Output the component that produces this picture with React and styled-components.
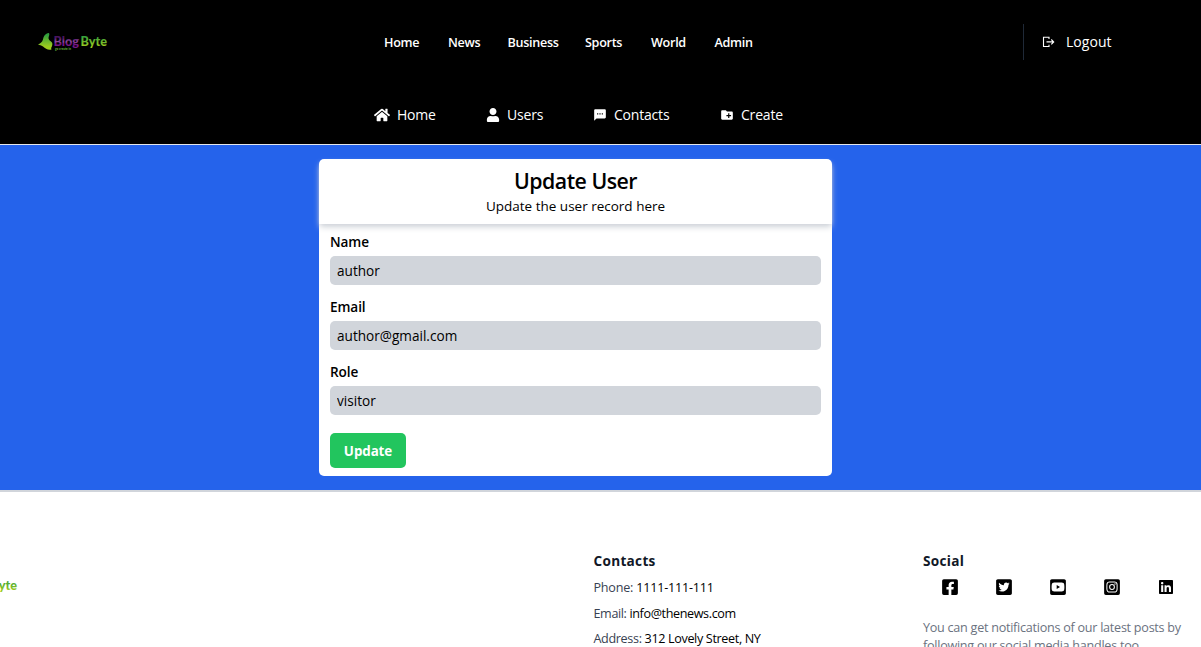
import React from "react";
import styled, { createGlobalStyle } from "styled-components";
import { FaHome, FaUser, FaFacebookSquare, FaTwitterSquare, FaYoutubeSquare, FaInstagramSquare, FaLinkedin } from "react-icons/fa";
import { MdSms, MdCreateNewFolder } from "react-icons/md";

const GlobalStyle = createGlobalStyle`
  *, *::before, *::after { box-sizing: border-box; }
  html, body { height: 647px; overflow: hidden; }
  body {
    margin: 0;
    background: #fff;
    color: #000;
    font-family: "Open Sans", "Noto Sans", sans-serif;
    font-size: 14px;
    line-height: 22px;
  }
  p, h1, h2 { margin: 0; padding: 0; }
  a { color: inherit; text-decoration: none; }
  svg { display: block; flex: none; }
`;

const Header = styled.header`
  height: 145px;
  background: #000;
  color: #fff;
  border-bottom: 1px solid #e5e7eb;
`;

const TopBar = styled.div`
  display: flex;
  align-items: center;
  height: 84px;
  padding-left: 36px;
`;

const MainNav = styled.nav`
  display: flex;
  margin-left: 274px;
  padding-top: 2px;
  width: 639px;
`;

const NavLink = styled.a`
  width: ${(p) => p.$w}px;
  font-size: 12.6px;
  font-weight: 600;
  letter-spacing: -0.3px;
  white-space: nowrap;
`;

const Logout = styled.a`
  display: flex;
  align-items: center;
  height: 36px;
  padding-left: 18px;
  border-left: 1px solid #1f2937;
  gap: 11px;
  font-size: 14px;
  letter-spacing: 0.05px;
`;

const AdminNav = styled.nav`
  display: flex;
  align-items: center;
  height: 62px;
  padding-left: 374px;
`;

const AdminLink = styled.a`
  display: flex;
  align-items: center;
  gap: 7px;
  width: ${(p) => p.$w}px;
  font-size: 14px;
  letter-spacing: -0.2px;
  white-space: nowrap;
`;

const Main = styled.main`
  display: flex;
  height: 347px;
  padding: 14px 0 0 319px;
  background: #2563eb;
  border-bottom: 2px solid #d1d5db;
`;

const Card = styled.section`
  width: 513px;
  height: 317px;
  background: #fff;
  border-radius: 5px;
`;

const CardHeader = styled.div`
  height: 65px;
  padding-top: 8px;
  text-align: center;
  border-radius: 5px 5px 0 0;
  box-shadow: 0 4px 6px -1px #d1d5db, 0 2px 4px -2px #d1d5db;
`;

const Title = styled.h1`
  font-size: 21.3px;
  font-weight: 600;
  line-height: 28px;
  letter-spacing: -0.5px;
`;

const Subtitle = styled.p`
  padding-top: 1px;
  font-size: 13.5px;
  line-height: 21px;
`;

const Form = styled.form`
  display: flex;
  flex-direction: column;
  align-items: flex-start;
  padding: 7px 11px 0;
`;

const Label = styled.label`
  height: 25px;
  font-size: 13.6px;
  font-weight: 600;
  letter-spacing: -0.1px;
`;

const Input = styled.input`
  width: 100%;
  height: 29px;
  margin-bottom: 11px;
  padding: 0 7px;
  border: 0;
  border-radius: 5px;
  background: #d1d5db;
  color: #000;
  font: 13.6px "Open Sans", "Noto Sans", sans-serif;
`;

const Button = styled.button`
  width: 76px;
  height: 35px;
  margin-top: 7px;
  padding: 0;
  border: 0;
  border-radius: 5px;
  background: #22c55e;
  color: #fff;
  font: 700 13.4px "Open Sans", "Noto Sans", sans-serif;
  letter-spacing: -0.1px;
`;

const Footer = styled.footer`
  display: flex;
  height: 155px;
  padding-top: 58px;
  overflow: hidden;
`;

const FooterBrand = styled.div`
  width: 593.5px;
  padding-top: 25px;
  overflow: hidden;
  svg { margin-left: -54px; }
`;

const Contacts = styled.div`
  width: 329.5px;
`;

const Social = styled.div`
  width: 278px;
`;

const FooterTitle = styled.h2`
  font-size: 13.6px;
  font-weight: 700;
  line-height: 22px;
  letter-spacing: 0.3px;
  color: #111827;
`;

const ContactLine = styled.p`
  margin-top: ${(p) => p.$gap || 4}px;
  height: 22px;
  font-size: 12.6px;
  letter-spacing: ${(p) => p.$ls || "-0.35px"};
  color: #000;
  span { color: #374151; }
`;

const SocialLinks = styled.div`
  display: flex;
  align-items: center;
  height: 18px;
  margin-top: 6px;
  padding-left: 18px;
  a { width: 54px; }
  a:last-child { padding-left: 1px; width: 18px; }
`;

const Note = styled.p`
  margin-top: 23px;
  font-size: 12.6px;
  line-height: 18px;
  letter-spacing: -0.26px;
  color: #6b7280;
  white-space: nowrap;
`;

const LogoutIcon = () => (
  <svg width="13" height="12" viewBox="0 0 13 12" fill="none" stroke="currentColor" strokeWidth="1.1">
    <path d="M7 3V1.3H1.5V10.5H7V8.8M4.5 5.9H11.7M9.3 3.5L11.7 5.9L9.3 8.3" />
  </svg>
);

const Logo = ({ id }) => (
  <svg width="74" height="22" viewBox="0 0 74 22" fontFamily="Lato, sans-serif" fontWeight="900">
    <defs>
      <linearGradient id={`${id}-leaf`} x1="0" y1="0" x2="0" y2="1">
        <stop offset="0.1" stopColor="#2e9e3e" />
        <stop offset="0.8" stopColor="#9bcb1f" />
      </linearGradient>
      <linearGradient id={`${id}-plum`} x1="0" y1="0" x2="0" y2="1">
        <stop offset="0.25" stopColor="#4a1560" />
        <stop offset="0.5" stopColor="#8d4a9c" />
        <stop offset="0.62" stopColor="#701480" />
        <stop offset="1" stopColor="#7d1990" />
      </linearGradient>
    </defs>
    <path d="M13 2C9 2.5 7.5 5.5 7 8.5C6 11.5 4 12.5 2 13.5C4 14 5 14.5 7 15.5C9.500 17.500 12 19.500 15.500 18.500C14.500 16.500 17 15 16.200 12C15.500 10 12.500 9.500 12.500 7C12.500 5 14 4 13 2Z" fill={`url(#${id}-leaf)`} />
    <text x="17.5" y="15.3" fontSize="12.5" textLength="25.5" lengthAdjust="spacingAndGlyphs" fill={`url(#${id}-plum)`}>Blog</text>
    <text x="44.5" y="15.3" fontSize="12.5" textLength="26.500" lengthAdjust="spacingAndGlyphs" fill={`url(#${id}-leaf)`}>Byte</text>
    <text x="19" y="18.5" fontSize="3.4" textLength="16" lengthAdjust="spacingAndGlyphs" fill="#5fa83a">go create in</text>
  </svg>
);

const sections = [["Home", 64], ["News", 59.5], ["Business", 77.5], ["Sports", 66], ["World", 63.5], ["Admin", 45]];

export default function App() {
  return (
    <>
      <GlobalStyle />
      <Header>
        <TopBar>
          <Logo id="top" />
          <MainNav>
            {sections.map(([name, w]) => <NavLink key={name} $w={w} href="#">{name}</NavLink>)}
          </MainNav>
          <Logout href="#"><LogoutIcon />Logout</Logout>
        </TopBar>
        <AdminNav>
          <AdminLink $w={112} href="#"><FaHome size={16} />Home</AdminLink>
          <AdminLink $w={107} href="#"><FaUser size={14} />Users</AdminLink>
          <AdminLink $w={127} href="#"><MdSms size={14} />Contacts</AdminLink>
          <AdminLink $w={80} href="#"><MdCreateNewFolder size={14} />Create</AdminLink>
        </AdminNav>
      </Header>
      <Main>
        <Card>
          <CardHeader>
            <Title>Update User</Title>
            <Subtitle>Update the user record here</Subtitle>
          </CardHeader>
          <Form>
            <Label>Name</Label>
            <Input defaultValue="author" />
            <Label>Email</Label>
            <Input defaultValue="author@gmail.com" />
            <Label>Role</Label>
            <Input defaultValue="visitor" />
            <Button type="button">Update</Button>
          </Form>
        </Card>
      </Main>
      <Footer>
        <FooterBrand><Logo id="foot" /></FooterBrand>
        <Contacts>
          <FooterTitle>Contacts</FooterTitle>
          <ContactLine $gap={5} $ls="-0.22px"><span>Phone:</span> 1111-111-111</ContactLine>
          <ContactLine $ls="-0.38px"><span>Email:</span> info@thenews.com</ContactLine>
          <ContactLine $gap={3}><span>Address:</span> 312 Lovely Street, NY</ContactLine>
        </Contacts>
        <Social>
          <FooterTitle>Social</FooterTitle>
          <SocialLinks>
            <a href="#"><FaFacebookSquare size={18} /></a>
            <a href="#"><FaTwitterSquare size={18} /></a>
            <a href="#"><FaYoutubeSquare size={18} /></a>
            <a href="#"><FaInstagramSquare size={18} /></a>
            <a href="#"><FaLinkedin size={16} /></a>
          </SocialLinks>
          <Note>You can get notifications of our latest posts by<br />following our social media handles too.</Note>
        </Social>
      </Footer>
    </>
  );
}
